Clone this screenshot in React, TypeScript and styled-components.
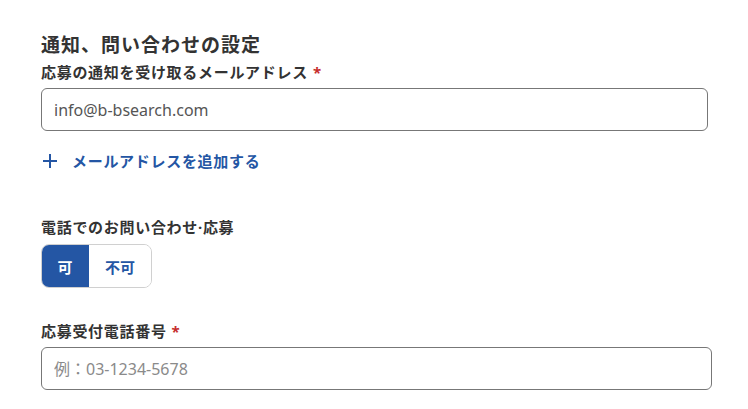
import styled, { createGlobalStyle } from "styled-components";

const GlobalStyle = createGlobalStyle`
    body {
        margin: 0;
        background: #ffffff;
        font-family: "Noto Sans", "Noto Sans CJK JP", sans-serif;
        color: #333333;
    }
`;

const Wrapper = styled.div`
    display: flex;
    flex-direction: column;
    width: 672px;
    padding: 33px 0 0 41px;
`;

const Title = styled.h2`
    margin: 0;
    font-size: 19px;
    line-height: 24px;
    letter-spacing: 1px;
    font-weight: bold;
    color: #333333;
`;

const Label = styled.div<{ $top: number }>`
    margin-top: ${(p) => p.$top}px;
    font-size: 15px;
    line-height: 20px;
    letter-spacing: 0.7px;
    font-weight: bold;
    color: #333333;
`;

const Required = styled.span`
    color: #c62d2d;
    margin-left: 5px;
`;

const Input = styled.input<{ $width: number }>`
    box-sizing: border-box;
    margin-top: 6px;
    width: ${(p) => p.$width}px;
    height: 43px;
    padding: 0 12px;
    border: 1px solid #777777;
    border-radius: 6px;
    font-family: "Noto Sans", "Noto Sans CJK JP", sans-serif;
    font-size: 16px;
    color: #555555;
    outline: none;
    &::placeholder {
        color: #8a8a8a;
    }
`;

const AddLink = styled.button`
    display: flex;
    align-items: center;
    gap: 15px;
    margin-top: 20px;
    padding: 0 0 0 2px;
    border: none;
    background: none;
    font-family: "Noto Sans", "Noto Sans CJK JP", sans-serif;
    font-size: 15px;
    line-height: 20px;
    letter-spacing: 0.7px;
    font-weight: bold;
    color: #2456a4;
    cursor: pointer;
    align-self: flex-start;
`;

const Toggle = styled.div`
    display: flex;
    margin-top: 7px;
    align-self: flex-start;
    height: 44px;
    border: 1px solid #d0d0d0;
    border-radius: 8px;
    overflow: hidden;
    box-sizing: border-box;
`;

const ToggleItem = styled.button<{ $active?: boolean; $width: number }>`
    width: ${(p) => p.$width}px;
    border: none;
    margin: ${(p) => (p.$active ? "-1px 0 -1px -1px" : "0")};
    padding: 0;
    background: ${(p) => (p.$active ? "#2456a4" : "#ffffff")};
    color: ${(p) => (p.$active ? "#ffffff" : "#2456a4")};
    font-family: "Noto Sans", "Noto Sans CJK JP", sans-serif;
    font-size: 15px;
    font-weight: bold;
    cursor: pointer;
`;

const App = () => {
    return (
        <Wrapper>
            <GlobalStyle />
            <Title>通知、問い合わせの設定</Title>
            <Label $top={5}>
                応募の通知を受け取るメールアドレス<Required>*</Required>
            </Label>
            <Input $width={667} defaultValue="info@b-bsearch.com" />
            <AddLink>
                <svg width="14" height="14" viewBox="0 0 14 14">
                    <path d="M7 0v14M0 7h14" stroke="#2456a4" strokeWidth="2" />
                </svg>
                メールアドレスを追加する
            </AddLink>
            <Label $top={46}>電話でのお問い合わせ·応募</Label>
            <Toggle>
                <ToggleItem $active $width={48}>可</ToggleItem>
                <ToggleItem $width={62}>不可</ToggleItem>
            </Toggle>
            <Label $top={33}>
                応募受付電話番号<Required>*</Required>
            </Label>
            <Input $width={671} placeholder="例：03-1234-5678" />
        </Wrapper>
    );
};

export default App;
